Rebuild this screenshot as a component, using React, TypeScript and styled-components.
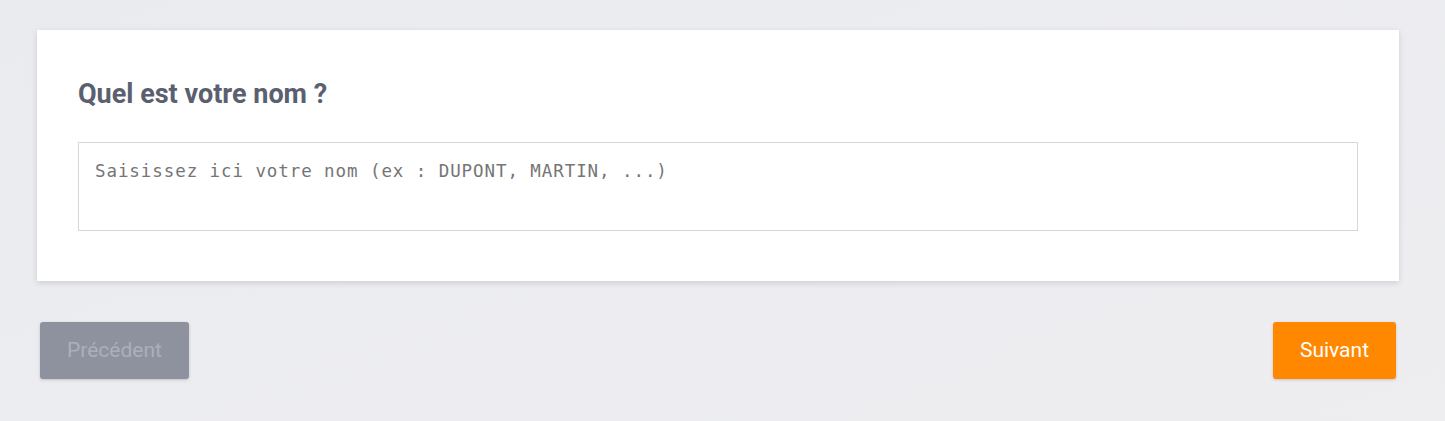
import React from "react";
import styled, { createGlobalStyle } from "styled-components";

const Global = createGlobalStyle`
  html, body { margin: 0; padding: 0; }
  body {
    background: linear-gradient(160deg, #eaebef 0%, #eeeef1 100%);
    min-height: 421px;
    font-family: Roboto, "Liberation Sans", sans-serif;
  }
`;

const Page = styled.div`
  padding: 30px 46px 0 37px;
  box-sizing: border-box;
  min-height: 421px;
`;

const Card = styled.section`
  background: #ffffff;
  padding: 48px 41px 50px 41px;
  box-shadow: 0 2px 6px rgba(0, 0, 0, 0.13);
`;

const Title = styled.h2`
  margin: 0 0 32px 0;
  font-family: Roboto, "Liberation Sans", sans-serif;
  font-weight: 700;
  font-size: 27px;
  line-height: 32px;
  color: #5a6070;
`;

const Field = styled.textarea`
  display: block;
  width: 100%;
  box-sizing: border-box;
  height: 89px;
  border: 1px solid #d6d6db;
  border-radius: 0;
  padding: 16px 16px;
  resize: none;
  outline: none;
  font-family: "DejaVu Sans Mono", monospace;
  font-size: 17.5px;
  letter-spacing: 0.92px;
  line-height: 24px;
  color: #333;
  &::placeholder {
    color: #757575;
    opacity: 1;
  }
`;

const Nav = styled.div`
  display: flex;
  justify-content: space-between;
  margin: 41px 3px 0 3px;
`;

const Button = styled.button<{ $primary?: boolean }>`
  height: 57px;
  padding: 0 27px 2px;
  border: none;
  border-radius: 3px;
  font-family: Roboto, "Liberation Sans", sans-serif;
  font-size: 21px;
  font-weight: 400;
  cursor: pointer;
  background: ${(p) => (p.$primary ? "#ff8800" : "#8d929e")};
  color: ${(p) => (p.$primary ? "#ffffff" : "#aab0bb")};
  box-shadow: 0 1px 3px rgba(0, 0, 0, 0.18);
`;

export default function App() {
  return (
    <>
      <Global />
      <Page>
        <Card>
          <Title>Quel est votre nom ?</Title>
          <Field placeholder="Saisissez ici votre nom (ex : DUPONT, MARTIN, ...)" />
        </Card>
        <Nav>
          <Button disabled>Précédent</Button>
          <Button $primary>Suivant</Button>
        </Nav>
      </Page>
    </>
  );
}
